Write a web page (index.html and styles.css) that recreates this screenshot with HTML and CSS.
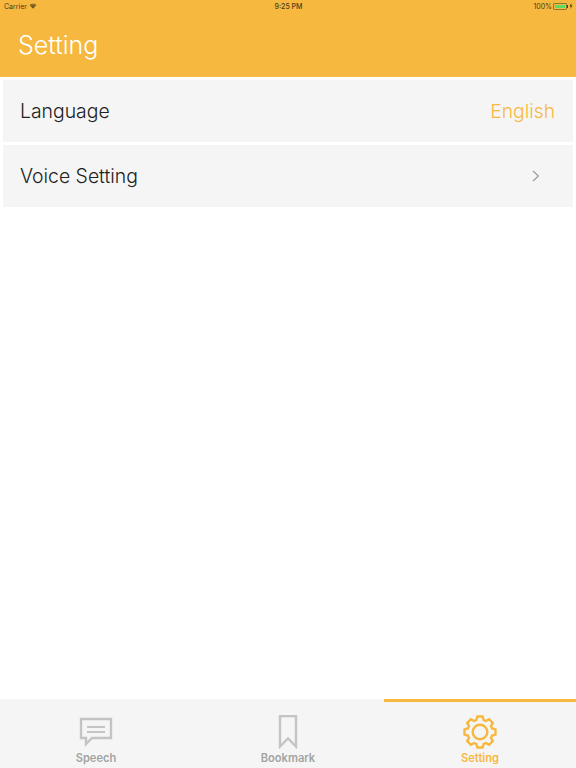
FILE: index.html
```html
<!DOCTYPE html>
<html lang="en">

<head>
    <meta charset="UTF-8">
    <meta name="viewport" content="width=device-width, initial-scale=1.0">
    <title>Setting</title>
    <link rel="stylesheet" href="styles.css">
</head>

<body>
    <div class="page">
        <header class="header">
            <div class="status">
                <div class="status-left">
                    <span>Carrier</span>
                    <svg class="wifi" viewBox="0 0 10 8">
                        <path d="M5 7.6 0.4 2.8C3 0.4 7 0.4 9.6 2.8Z" fill="#6b5520"/>
                        <path d="M1.800 3.400C3.800 2.100 6.200 2.100 8.200 3.400" fill="none" stroke="#f7b840" stroke-width="0.6"/>
                    </svg>
                </div>
                <div class="status-time">9:25 PM</div>
                <div class="status-right">
                    <span>100%</span>
                    <span class="battery"><span class="battery-fill"></span></span>
                    <span class="battery-tip"></span>
                    <svg class="bolt" viewBox="0 0 4 7">
                        <path d="M2.4 0 0.4 3.9H1.8L1.4 7 3.6 2.9H2.2Z" fill="#3d3319"/>
                    </svg>
                </div>
            </div>
            <h1 class="title">Setting</h1>
        </header>

        <main class="list">
            <div class="row">
                <span class="row-name">Language</span>
                <span class="row-value">English</span>
            </div>
            <div class="row">
                <span class="row-name">Voice Setting</span>
                <svg class="chevron" viewBox="0 0 8 12">
                    <path d="M1 1 6.4 6 1 11" fill="none" stroke="#9a9a9a" stroke-width="1.2"/>
                </svg>
            </div>
        </main>

        <nav class="tabs">
            <div class="tab">
                <svg class="tab-icon" viewBox="0 0 34 30">
                    <path d="M2 2H32V21H13L7 27V21H2Z" fill="none" stroke="#c4c4c4" stroke-width="2.400"/>
                    <path d="M8 10H26M8 15H26" fill="none" stroke="#c4c4c4" stroke-width="2"/>
                </svg>
                <span class="tab-label">Speech</span>
            </div>
            <div class="tab">
                <svg class="tab-icon" viewBox="0 0 34 34">
                    <path d="M9 1H25V31.500L17 23.500 9 31.500Z" fill="none" stroke="#c4c4c4" stroke-width="2.400"/>
                </svg>
                <span class="tab-label">Bookmark</span>
            </div>
            <div class="tab active">
                <svg class="tab-icon" viewBox="-17 -17 34 34">
                    <path d="M-3.6-12-2.6-15.500H2.600L3.600-12 5.940-11.030 9.120-12.800 12.800-9.120 11.030-5.940 12-3.600 15.500-2.600V2.600L12 3.600 11.030 5.940 12.800 9.120 9.120 12.800 5.940 11.030 3.600 12 2.600 15.500H-2.600L-3.600 12-5.940 11.030-9.120 12.800-12.800 9.120-11.030 5.940-12 3.600-15.500 2.600V-2.600L-12-3.600-11.030-5.940-12.800-9.120-9.120-12.800-5.940-11.030Z" fill="none" stroke="#f7b840" stroke-width="2.400"/>
                    <circle cx="0" cy="0" r="7.300" fill="none" stroke="#f7b840" stroke-width="2.400"/>
                </svg>
                <span class="tab-label">Setting</span>
            </div>
        </nav>
    </div>
</body>

</html>
```

FILE: styles.css
```css
* {
    box-sizing: border-box;
}

html, body {
    margin: 0;
    padding: 0;
}

body {
    font-family: "Inter", "Liberation Sans", sans-serif;
    background-color: white;
}

.page {
    width: 576px;
    height: 768px;
    display: flex;
    flex-direction: column;
    overflow: hidden;
}

.header {
    height: 77px;
    background-color: #f7b840;
}

.status {
    height: 12px;
    padding: 0 3px 0 4px;
    display: grid;
    grid-template-columns: 1fr auto 1fr;
    align-items: center;
    font-size: 7px;
    color: #4a3c1a;
}

.status-left {
    display: flex;
    align-items: center;
    gap: 2px;
}

.wifi {
    width: 8px;
    height: 6px;
}

.status-time {
    font-weight: 500;
}

.status-right {
    display: flex;
    align-items: center;
    justify-content: flex-end;
}

.battery {
    width: 14px;
    height: 7px;
    margin-left: 1px;
    padding: 1px;
    border: 1px solid #8a7a30;
    border-radius: 1px;
    display: flex;
}

.battery-fill {
    flex: 1;
    background-color: #5fdc5f;
}

.battery-tip {
    width: 1px;
    height: 3px;
    background-color: #4a3c1a;
}

.bolt {
    width: 4px;
    height: 6px;
    margin-left: 1px;
}

.title {
    margin: 0;
    padding: 16px 0 0 18px;
    font-size: 25px;
    font-weight: 300;
    line-height: 34px;
    color: white;
}

.list {
    flex: 1;
    padding: 3px 3px 0;
    display: flex;
    flex-direction: column;
    gap: 3px;
}

.row {
    height: 62px;
    padding: 0 18px 0 17px;
    background-color: #f5f5f5;
    display: flex;
    align-items: center;
    justify-content: space-between;
}

.row-name {
    font-size: 19.4px;
    font-weight: 350;
    color: #222;
}

.row-value {
    font-size: 19.3px;
    font-weight: 350;
    color: #f7b840;
}

.chevron {
    width: 8px;
    height: 12px;
    margin-right: 15px;
}

.tabs {
    height: 69px;
    background-color: #f5f5f5;
    display: flex;
}

.tab {
    flex: 1;
    padding-top: 16px;
    border-top: 3px solid transparent;
    display: flex;
    flex-direction: column;
    align-items: center;
}

.tab.active {
    border-top-color: #f7b840;
}

.tab-icon {
    width: 34px;
    height: 34px;
    margin-top: -3px;
}

.tab-label {
    font-size: 11.1px;
    font-weight: 600;
    line-height: 14px;
    margin-top: 2px;
    color: #a3a3a3;
}

.tab.active .tab-label {
    color: #f7b840;
}
```
